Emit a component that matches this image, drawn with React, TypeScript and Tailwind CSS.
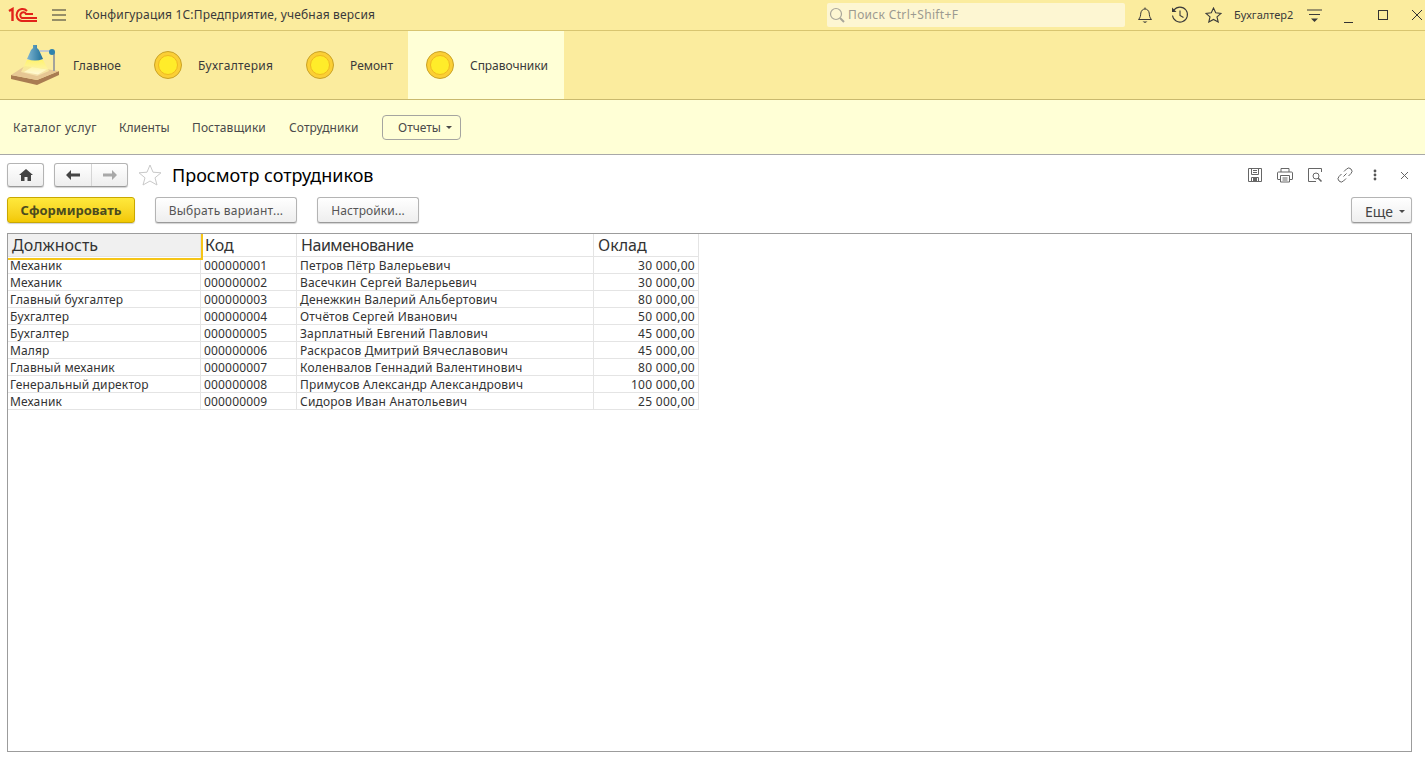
import React from "react";

const Circle = () => (
  <svg width="28" height="28" viewBox="0 0 28 28" className="shrink-0">
    <circle cx="14" cy="14" r="13.5" fill="#fbcf35" stroke="#c9a227" strokeWidth="1" />
    <circle cx="14" cy="14" r="9.5" fill="#ffec2a" stroke="#f0b91f" strokeWidth="1" />
  </svg>
);

const Lamp = () => (
  <svg width="50" height="40" viewBox="0 0 50 40" className="shrink-0">
    <defs>
      <linearGradient id="lg1" x1="0" y1="0" x2="0" y2="1">
        <stop offset="0" stopColor="#fff36a" stopOpacity="0.95" />
        <stop offset="1" stopColor="#fff8c8" stopOpacity="0.5" />
      </linearGradient>
      <linearGradient id="lg2" x1="0" y1="0" x2="1" y2="0">
        <stop offset="0" stopColor="#7fb6d2" />
        <stop offset="1" stopColor="#1f6f99" />
      </linearGradient>
    </defs>
    <path d="M1 30 L27 35 L49 26 V30 L27 40 L1 34 Z" fill="#a97c52" />
    <path d="M1 30 L15 21 L49 26 L27 35 Z" fill="#e6c794" />
    <path d="M14 27 L22 22 L37 24.5 L28 29.5 Z" fill="#fffbef" />
    <path d="M17 15 L33 15 L39 26 L27 31 L11 27 Z" fill="url(#lg1)" />
    <rect x="43" y="7" width="2" height="19" fill="#a3a39b" />
    <rect x="30" y="5" width="12" height="2" fill="#c4cace" />
    <circle cx="42" cy="7" r="3" fill="#2f83ad" />
    <path d="M23 0 L27 0 L27 3 L29 5 L33 14 Q25 17 17 14 L21 5 L23 3 Z" fill="url(#lg2)" />
  </svg>
);

const Caret = ({ c = "#4a4a4a" }: { c?: string }) => (
  <svg width="6" height="3" viewBox="0 0 6 3" className="shrink-0"><path d="M0 0 H6 L3 3 Z" fill={c} /></svg>
);

const rows = [
  ["Механик", "000000001", "Петров Пётр Валерьевич", "30 000,00"],
  ["Механик", "000000002", "Васечкин Сергей Валерьевич", "30 000,00"],
  ["Главный бухгалтер", "000000003", "Денежкин Валерий Альбертович", "80 000,00"],
  ["Бухгалтер", "000000004", "Отчётов Сергей Иванович", "50 000,00"],
  ["Бухгалтер", "000000005", "Зарплатный Евгений Павлович", "45 000,00"],
  ["Маляр", "000000006", "Раскрасов Дмитрий Вячеславович", "45 000,00"],
  ["Главный механик", "000000007", "Коленвалов Геннадий Валентинович", "80 000,00"],
  ["Генеральный директор", "000000008", "Примусов Александр Александрович", "100 000,00"],
  ["Механик", "000000009", "Сидоров Иван Анатольевич", "25 000,00"],
];

const gray = "h-[26px] rounded-[3px] border border-[#b4b4b4] border-b-[#9a9a9a] bg-gradient-to-b from-white to-[#eeeeee] shadow-[0_1px_1px_rgba(0,0,0,0.18)]";

export default function App() {
  return (
    <div className="[font-family:'Liberation_Sans',Arial,sans-serif] w-[1425px] h-[764px] overflow-hidden bg-white text-[12px] text-[#333] flex flex-col">
      {/* Title bar */}
      <div className="h-[31px] shrink-0 bg-[#fbec9e] border-b border-[#d8c570] flex items-center">
        <svg width="30" height="16" viewBox="0 0 30 16" className="ml-[8px] shrink-0">
          <g fill="none" stroke="#e2231a" strokeWidth="2">
            <path d="M1 4 L4.5 2 V14" strokeWidth="2.4" />
            <path d="M29 14 H14 A6 6 0 1 1 19 4" />
            <path d="M29 11 H14 A3 3 0 1 1 18 7 H25" />
          </g>
        </svg>
        <svg width="14" height="12" viewBox="0 0 14 12" className="ml-[14px] shrink-0">
          <path d="M0 1 H14 M0 6 H14 M0 11 H14" stroke="#333" strokeWidth="1" />
        </svg>
        <span className="ml-[19px] tracking-[0.17px] text-[#3a3a3a]">Конфигурация 1С:Предприятие, учебная версия</span>
        <div className="ml-auto w-[298px] h-[24px] rounded-[2px] bg-[#fdf6d2] flex items-center pl-[2px]">
          <svg width="16" height="16" viewBox="0 0 16 16" className="shrink-0">
            <circle cx="7" cy="7" r="5.5" fill="none" stroke="#a9a69a" strokeWidth="1.2" />
            <path d="M11 11 L15 15" stroke="#a9a69a" strokeWidth="2" />
          </svg>
          <span className="ml-[3px] tracking-[0.33px] text-[#9c9a90]">Поиск Ctrl+Shift+F</span>
        </div>
        <svg width="16" height="17" viewBox="0 0 16 17" className="ml-[12px] shrink-0">
          <path d="M1.5 12.5 H14.5 C12.5 10.5 12.5 8.5 12.2 6 C11.8 3.5 10 2 8 2 C6 2 4.2 3.5 3.8 6 C3.5 8.5 3.5 10.5 1.5 12.5 Z M8 0.5 V2" fill="none" stroke="#3a3a3a" />
          <path d="M5.5 14.5 H10.5 L8 16 Z" fill="#3a3a3a" />
        </svg>
        <svg width="18" height="18" viewBox="0 0 18 18" className="ml-[18px] shrink-0">
          <path d="M3 4 A7.5 7.5 0 1 1 1.5 9.5" fill="none" stroke="#3a3a3a" strokeWidth="1.1" />
          <path d="M1 1.5 L1 6 L5.5 6 Z" fill="#3a3a3a" />
          <path d="M9 4.5 V9.5 L12.5 11.5" fill="none" stroke="#3a3a3a" strokeWidth="1.1" />
        </svg>
        <svg width="17" height="16" viewBox="0 0 17 16" className="ml-[16px] shrink-0">
          <path d="M8.5 1 L10.7 5.8 L16 6.4 L12 9.9 L13.2 15 L8.5 12.4 L3.8 15 L5 9.9 L1 6.4 L6.3 5.8 Z" fill="none" stroke="#3a3a3a" strokeWidth="1.1" />
        </svg>
        <span className="ml-[12px] w-[59px] text-[11px] text-[#3a3a3a] whitespace-nowrap">Бухгалтер2</span>
        <svg width="15" height="13" viewBox="0 0 15 13" className="ml-[14px] shrink-0">
          <path d="M0 1 H15 M2 5.5 H13" stroke="#3a3a3a" />
          <path d="M4 9.5 H11 L7.5 13 Z" fill="#3a3a3a" />
        </svg>
        <div className="ml-[22px] w-[9px] h-[10px] border-b border-[#333] shrink-0 mt-[5px]" />
        <div className="ml-[25px] w-[10px] h-[10px] border border-[#333] shrink-0" />
        <svg width="10" height="10" viewBox="0 0 10 10" className="ml-[24px] mr-[3px] shrink-0">
          <path d="M0 0 L10 10 M10 0 L0 10" stroke="#333" />
        </svg>
      </div>

      {/* Sections */}
      <div className="h-[69px] shrink-0 bg-[#fbec9e] border-b border-[#c9b96e] flex text-[#3a3a3a]">
        <div className="flex items-center pl-[10px] w-[136px] gap-[13px]">
          <Lamp />
          <span className="pt-[2px] tracking-[0.1px]">Главное</span>
        </div>
        <div className="flex items-center w-[146px] pl-[18px] gap-[16px]"><Circle /><span className="pt-[2px] tracking-[0.27px]">Бухгалтерия</span></div>
        <div className="flex items-center w-[126px] pl-[24px] gap-[16px]"><Circle /><span className="pt-[2px]">Ремонт</span></div>
        <div className="flex items-center w-[156px] pl-[18px] gap-[16px] bg-[#ffffd6]"><Circle /><span className="pt-[2px] tracking-[-0.05px]">Справочники</span></div>
      </div>

      {/* Sub nav */}
      <div className="h-[55px] shrink-0 bg-[#ffffd6] border-b border-[#a8a8a8] flex items-center pl-[13px] pt-[1px] text-[#4a4a4a]">
        <span className="w-[84px] whitespace-nowrap tracking-[0.4px]">Каталог услуг</span>
        <span className="ml-[22px] w-[50px]">Клиенты</span>
        <span className="ml-[23px] w-[74px] tracking-[0.1px]">Поставщики</span>
        <span className="ml-[23px] w-[70px] tracking-[0.1px]">Сотрудники</span>
        <div className="ml-[23px] w-[79px] h-[25px] rounded-[4px] border border-[#a5a5a0] flex items-center pl-[15px] gap-[5px]">
          <span>Отчеты</span><Caret />
        </div>
      </div>

      {/* Form header */}
      <div className="h-[42px] shrink-0 flex items-start pl-[7px] pt-[8px]">
        <div className={`${gray} !h-[24px] w-[37px] flex items-center justify-center`}>
          <svg width="14" height="12" viewBox="0 0 14 12"><path d="M7 0 L14 6 H12 V12 H8.5 V8 H5.5 V12 H2 V6 H0 Z" fill="#444" /></svg>
        </div>
        <div className={`${gray} !h-[24px] ml-[10px] w-[74px] flex`}>
          <div className="w-[37px] flex items-center justify-center border-r border-[#d5d5d5]">
            <svg width="14" height="10" viewBox="0 0 14 10"><path d="M5 0 V3.5 H14 V6.5 H5 V10 L0 5 Z" fill="#444" /></svg>
          </div>
          <div className="flex-1 flex items-center justify-center">
            <svg width="14" height="10" viewBox="0 0 14 10"><path d="M9 0 V3.5 H0 V6.5 H9 V10 L14 5 Z" fill="#a8a8a8" /></svg>
          </div>
        </div>
        <svg width="24" height="22" viewBox="0 0 24 22" className="ml-[10px] mt-[1px] shrink-0">
          <path d="M12 1 L15 8.2 L23 8.8 L17 13.8 L19 21 L12 17 L5 21 L7 13.8 L1 8.8 L9 8.2 Z" fill="none" stroke="#c9c9c9" />
        </svg>
        <span className="ml-[10px] text-[18px] leading-[24px] text-black">Просмотр сотрудников</span>
        <div className="ml-auto flex items-center mr-[17px] h-[24px]">
          <svg width="16" height="16" viewBox="0 0 16 16" fill="none" stroke="#666">
            <path d="M1.5 1.5 H14.5 V14.5 H1.5 Z M4.5 1.5 V7.5 H11.5 V1.5 M6 3.5 H10 M6 5.5 H10 M4.5 14.5 V10.5 H11.5 V14.5" />
            <rect x="6" y="11" width="4" height="3" fill="#666" stroke="none" />
          </svg>
          <svg width="16" height="16" viewBox="0 0 16 16" fill="none" stroke="#666" className="ml-[14px]">
            <path d="M4 5 V1.5 H12 V5 M3.5 12.5 H1 Q0.5 12.5 0.5 12 V6 Q0.5 5 1.5 5 H14.5 Q15.5 5 15.5 6 V12 Q15.5 12.5 15 12.5 H12.5 M3.5 8.5 H12.5 V15 H3.5 Z M5.5 11 H10.5 M5.5 13 H10.5" />
          </svg>
          <svg width="16" height="16" viewBox="0 0 16 16" fill="none" stroke="#666" className="ml-[14px]">
            <path d="M14.5 5 V1.5 H1.5 V14.5 H9" />
            <circle cx="9" cy="9" r="3" />
            <path d="M11 11 L14.5 14.5" strokeWidth="1.6" />
          </svg>
          <svg width="16" height="16" viewBox="0 0 16 16" fill="none" stroke="#666" className="ml-[14px]">
            <path d="M6.5 9.5 L9.5 6.5 M7 4.5 L9.5 2 A3 3 0 0 1 14 6.5 L11.5 9 M9 11.5 L6.5 14 A3 3 0 0 1 2 9.5 L4.5 7" />
          </svg>
          <svg width="4" height="12" viewBox="0 0 4 12" className="ml-[20px]">
            <circle cx="2" cy="2" r="1.4" fill="#555" /><circle cx="2" cy="6" r="1.4" fill="#555" /><circle cx="2" cy="10" r="1.4" fill="#555" />
          </svg>
          <svg width="7" height="7" viewBox="0 0 7 7" className="ml-[24px]">
            <path d="M0 0 L7 7 M7 0 L0 7" stroke="#666" />
          </svg>
        </div>
      </div>

      {/* Command bar */}
      <div className="h-[26px] shrink-0 flex items-center pr-[13px] pl-[7px]">
        <button className="h-[26px] w-[128px] pt-[2px] rounded-[3px] border border-[#c9a800] bg-gradient-to-b from-[#ffe93b] to-[#f2c800] shadow-[0_1px_1px_rgba(0,0,0,0.18)] font-bold text-[13px] text-[#4b4b1e]">Сформировать</button>
        <button className={`${gray} ml-[20px] w-[142px] pt-[2px] tracking-[0.25px] text-[#555]`}>Выбрать вариант...</button>
        <button className={`${gray} ml-[20px] w-[102px] pt-[2px] tracking-[0.1px] text-[#555]`}>Настройки...</button>
        <button className={`${gray} ml-auto w-[61px] pt-[2px] pl-[13px] flex items-center gap-[6px] text-[14px] text-[#444]`}><span>Еще</span><Caret /></button>
      </div>

      {/* Report */}
      <div className="mt-[10px] ml-[7px] w-[1405px] h-[519px] border border-[#9c9c9c] overflow-hidden">
        <table className="border-separate border-spacing-0 table-fixed w-[691px] text-[12px] leading-[14px] text-[#333]">
          <colgroup>
            <col className="w-[193px]" /><col className="w-[96px]" /><col className="w-[297px]" /><col className="w-[105px]" />
          </colgroup>
          <thead>
            <tr className="h-[23px] text-[16px] text-[#333] tracking-normal">
              <th className="relative font-normal text-left pl-[4px] bg-[#f0f0f0] border-r border-b border-[#e4e4e4]">
                Должность
                <div className="absolute left-0 top-0 w-[195px] h-[26px] border-r-2 border-b-2 border-[#f5c518] pointer-events-none" />
              </th>
              <th className="font-normal text-left pl-[4px] border-r border-b border-[#e4e4e4]">Код</th>
              <th className="font-normal text-left pl-[4px] tracking-[-0.45px] border-r border-b border-[#e4e4e4]">Наименование</th>
              <th className="font-normal text-left pl-[4px] border-r border-b border-[#e4e4e4]">Оклад</th>
            </tr>
          </thead>
          <tbody>
            {rows.map((r, i) => (
              <tr key={i} className="h-[17px]">
                <td className="pl-[2px] pt-[2px] tracking-[0.15px] border-r border-b border-[#e4e4e4] whitespace-nowrap">{r[0]}</td>
                <td className="pl-[3px] pt-[2px] tracking-[0.17px] border-r border-b border-[#e4e4e4] whitespace-nowrap">{r[1]}</td>
                <td className="pl-[3px] pt-[2px] tracking-[0.2px] border-r border-b border-[#e4e4e4] whitespace-nowrap">{r[2]}</td>
                <td className="pr-[3px] pt-[2px] tracking-[0.28px] text-right border-r border-b border-[#e4e4e4] whitespace-nowrap">{r[3]}</td>
              </tr>
            ))}
          </tbody>
        </table>
      </div>
    </div>
  );
}
